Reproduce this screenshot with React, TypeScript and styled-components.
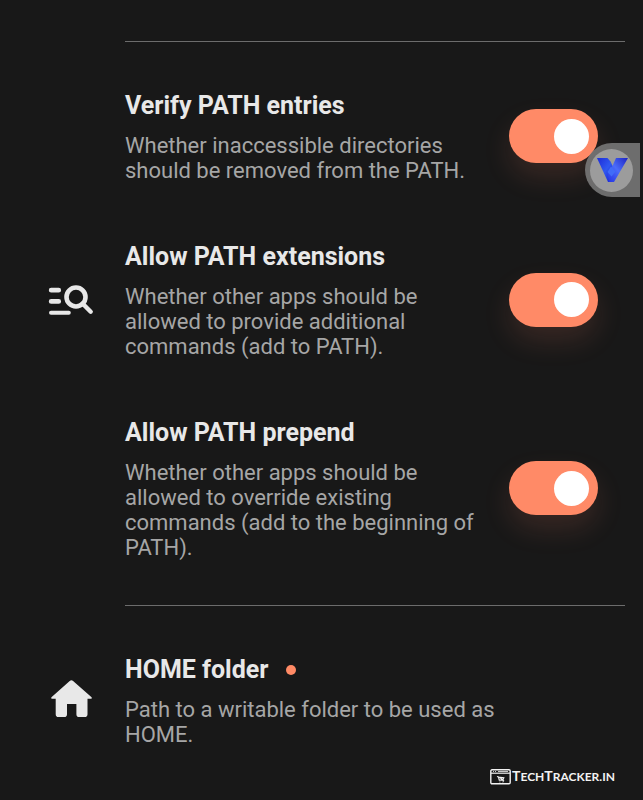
import React, { useId, useState } from "react";
import styled, { createGlobalStyle, css } from "styled-components";

const GlobalStyle = createGlobalStyle`
  *, *::before, *::after { box-sizing: border-box; }
  body {
    margin: 0;
    background: #181818;
    color: #e8e8e8;
    font-family: Roboto, "Liberation Sans", sans-serif;
  }
`;

const Screen = styled.main`
  position: relative;
  min-height: 100vh;
  padding: 41px 0 16px;
  overflow: hidden;
`;

const Divider = styled.hr`
  height: 1px;
  margin: 0 18px 0 125px;
  border: 0;
  background: #6c6c6c;
`;

const Group = styled.section`
  display: flex;
  flex-direction: column;
  gap: 57px;
  padding: 47px 0 45px;
`;

const rowLayout = css`
  display: grid;
  grid-template-columns: 125px minmax(0, 1fr) 89px;
  align-items: center;
  padding-right: 45px;
`;

const Row = styled.div`
  ${rowLayout}
`;

const RowButton = styled.button`
  ${rowLayout}
  width: 100%;
  padding-top: 0;
  padding-bottom: 0;
  padding-left: 0;
  border: 0;
  background: none;
  color: inherit;
  font: inherit;
  text-align: left;
  cursor: pointer;
`;

const IconCell = styled.span`
  display: flex;
  padding-left: 48px;
`;

const Copy = styled.span<{ $gutter?: boolean }>`
  display: flex;
  flex-direction: column;
  gap: 10px;
  padding-right: ${({ $gutter }) => ($gutter ? "16px" : "0")};
`;

const Title = styled.span`
  display: flex;
  align-items: center;
  gap: 18px;
  font-size: 25px;
  font-weight: 700;
  line-height: 34px;
`;

const Description = styled.span`
  color: #a6a6a6;
  font-size: 22px;
  line-height: 25px;
`;

const Dot = styled.span`
  width: 10px;
  height: 10px;
  border-radius: 50%;
  background: #ff8a65;
`;

const Switch = styled.input`
  appearance: none;
  display: flex;
  align-items: center;
  width: 89px;
  height: 54px;
  margin: 0;
  padding: 0 9px;
  border-radius: 27px;
  background: #555;
  cursor: pointer;

  &::before {
    content: "";
    width: 35px;
    height: 35px;
    border-radius: 50%;
    background: #fff;
  }

  &:checked {
    justify-content: flex-end;
    background: #ff8a67;
    box-shadow: 0 14px 28px rgba(255, 138, 103, 0.14);
  }
`;

const FloatingButton = styled.button`
  position: absolute;
  top: 143px;
  right: 3px;
  display: flex;
  align-items: center;
  width: 55px;
  height: 54px;
  padding: 0 0 0 5px;
  border: 0;
  border-radius: 27px 0 0 27px;
  background: rgba(125, 125, 125, 0.85);
  cursor: pointer;
`;

const FloatingDisc = styled.span`
  display: flex;
  align-items: center;
  justify-content: center;
  width: 43px;
  height: 43px;
  border-radius: 50%;
  background: #9c9c9c;
`;

const Credit = styled.a`
  position: absolute;
  right: 28px;
  bottom: 22px;
  display: flex;
  align-items: center;
  gap: 1px;
  color: #f2f2f2;
  font-family: Lato, sans-serif;
  font-size: 12px;
  font-weight: 700;
  line-height: 18px;
  text-decoration: none;
  text-transform: uppercase;
`;

const Initial = styled.span`
  font-size: 14px;
`;

const SearchListIcon = () => (
  <svg width="46" height="32" viewBox="0 0 46 32" fill="none" stroke="#e8e8e8" strokeLinecap="round" aria-hidden="true">
    <path d="M3.2 6.2h7.5M3.2 17.4h7.5" strokeWidth="4.8" />
    <path d="M3 28.7h17.8" strokeWidth="4" />
    <circle cx="28" cy="13" r="9.5" strokeWidth="4.6" />
    <path d="M34.5 19.5l8.2 8.2" strokeWidth="4.4" />
  </svg>
);

const HomeIcon = () => (
  <svg width="46" height="44" viewBox="0 0 46 44" aria-hidden="true">
    <path
      fill="#e8e8e8"
      d="M21.7 3.1Q23.4 1.5 25.1 3.1L43.3 19.1Q44.8 20.6 42.9 20.8H39.5V36.2Q39.5 39 36.7 39H31Q28.4 39 28.4 36.2V26H19V36.2Q19 39 16.3 39H10.5Q7.7 39 7.7 36.2V20.8H4.2Q2.2 20.6 3.7 19.1Z"
    />
  </svg>
);

const VIcon = () => (
  <svg width="32" height="26" viewBox="0 0 32 26" aria-hidden="true">
    <defs>
      <linearGradient id="v-left" x1="0" y1="0" x2="1" y2="1">
        <stop offset="0" stopColor="#1d2bd8" />
        <stop offset="0.5" stopColor="#3058f0" />
        <stop offset="1" stopColor="#1219cf" />
      </linearGradient>
      <linearGradient id="v-right" x1="0" y1="1" x2="1" y2="0">
        <stop offset="0" stopColor="#2331e2" />
        <stop offset="0.5" stopColor="#4b6cfa" />
        <stop offset="1" stopColor="#1c22c2" />
      </linearGradient>
    </defs>
    <path d="M1 1h10.5l3 3.5 4 8.5-4.5 12h-2Z" fill="url(#v-left)" />
    <path d="M20 1h12L18 25h-5l-1.5-8L16 10Z" fill="url(#v-right)" />
    <path d="M15 9.5l4.5 5-4 5-4-4.5Z" fill="#416cf8" />
  </svg>
);

const BrowserIcon = () => (
  <svg width="21" height="16" viewBox="0 0 21 16" fill="none" stroke="#f2f2f2" aria-hidden="true">
    <rect x="0.8" y="0.8" width="19.4" height="14" rx="1.2" strokeWidth="1.4" />
    <path d="M1 4.2h19" strokeWidth="1.2" />
    <path d="M3 2.5h1M5 2.5h1M8 2.5h10" strokeWidth="0.8" />
    <path d="M7 7.5l1.5.5.8 3.2h3.5l1-2.4-4-.4 4.2 3.8M9.5 13h.8M12.5 13h.8" strokeWidth="1.2" />
  </svg>
);

type SwitchRowProps = {
  title: string;
  description: string;
  icon?: React.ReactNode;
};

function SwitchRow({ title, description, icon }: SwitchRowProps) {
  const id = useId();
  const [on, setOn] = useState(true);
  return (
    <Row>
      <IconCell>{icon}</IconCell>
      <Copy $gutter>
        <Title as="label" htmlFor={id}>{title}</Title>
        <Description id={`${id}-text`}>{description}</Description>
      </Copy>
      <Switch
        id={id}
        type="checkbox"
        role="switch"
        aria-describedby={`${id}-text`}
        checked={on}
        onChange={(event) => setOn(event.target.checked)}
      />
    </Row>
  );
}

export default function App() {
  return (
    <>
      <GlobalStyle />
      <Screen>
        <Divider />
        <Group>
          <SwitchRow
            title="Verify PATH entries"
            description="Whether inaccessible directories should be removed from the PATH."
          />
          <SwitchRow
            title="Allow PATH extensions"
            description="Whether other apps should be allowed to provide additional commands (add to PATH)."
            icon={<SearchListIcon />}
          />
          <SwitchRow
            title="Allow PATH prepend"
            description="Whether other apps should be allowed to override existing commands (add to the beginning of PATH)."
          />
        </Group>
        <Divider />
        <Group>
          <RowButton type="button">
            <IconCell><HomeIcon /></IconCell>
            <Copy>
              <Title>HOME folder <Dot /></Title>
              <Description>Path to a writable folder to be used as HOME.</Description>
            </Copy>
          </RowButton>
        </Group>
        <FloatingButton type="button" aria-label="Open assistant">
          <FloatingDisc><VIcon /></FloatingDisc>
        </FloatingButton>
        <Credit href="#techtracker">
          <BrowserIcon />
          <span><Initial>T</Initial>ech<Initial>T</Initial>racker.in</span>
        </Credit>
      </Screen>
    </>
  );
}
